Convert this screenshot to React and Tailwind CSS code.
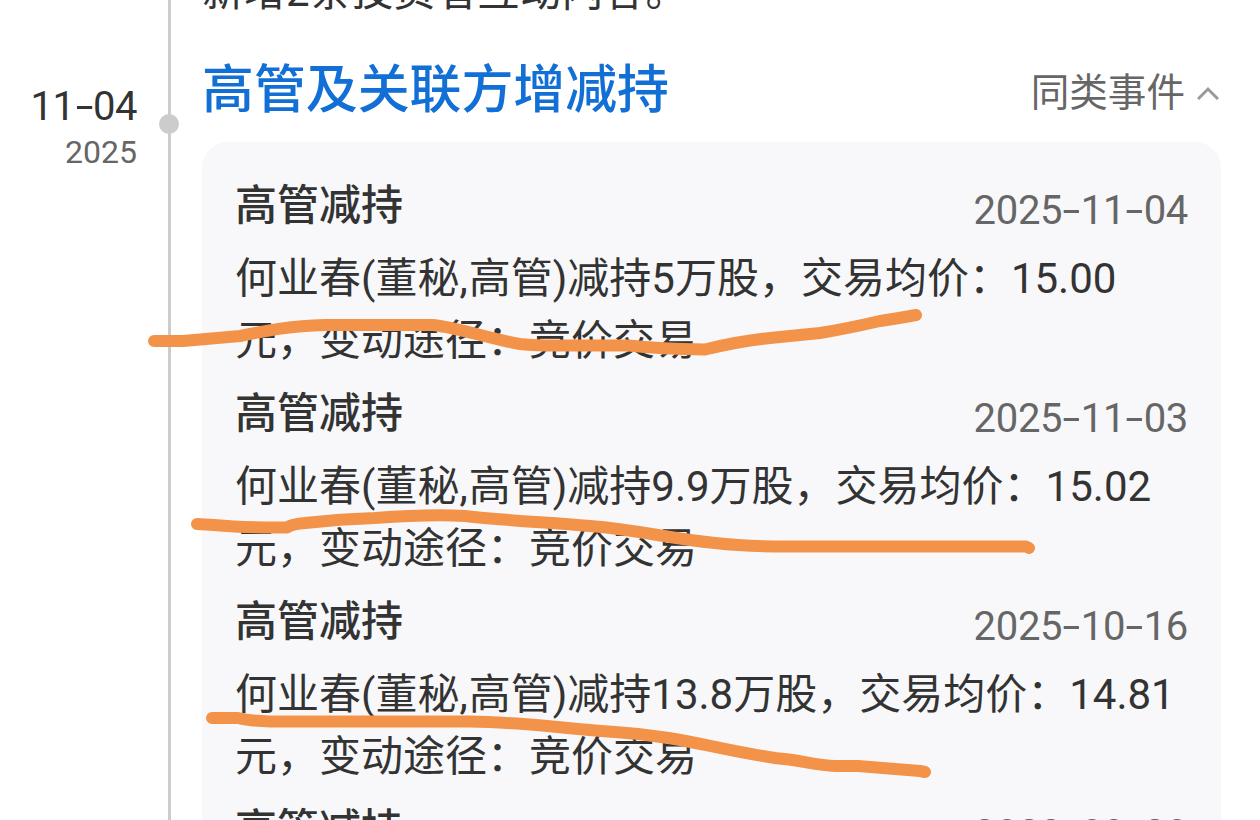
import { Fragment } from "react";

const records = [
  { date: "2025-11-04", amount: "5万股", price: "15.00" },
  { date: "2025-11-03", amount: "9.9万股", price: "15.02" },
  { date: "2025-10-16", amount: "13.8万股", price: "14.81" },
  { date: "2023-09-20", amount: "10万股", price: "16.20" },
];

const strokes = [
  "M154 341 H183 L240 336 C270 330 290 326 325 325 H433 C460 328 490 339 520 344 Q540 346 570 345.500 H628 Q660 349 705 349.500 Q740 341 770 338 L820 333 Q845 329 880 321 Q900 318 916 315",
  "M197 524 L214 525 Q245 528 287 527.500 Q292 524 305 523 Q340 519 375 518 Q430 514 465 516 C500 520 540 522 590 526 C640 530 665 538 715 543 Q750 547 800 546.500 H1026 L1029 548",
  "M212 718 H238 Q250 721 270 721.500 H470 C520 722 560 728 615 732 C680 736 715 749 775 758 C800 760 815 765 835 766 H858 L920 771 L925 772",
];

function DateText({ value }) {
  const parts = value.split("-");
  return parts.map((part, i) => (
    <Fragment key={i}>
      {i > 0 && <span className="inline-block w-[18.500px] scale-x-[1.6] text-center">-</span>}
      <span>{part}</span>
    </Fragment>
  ));
}

function RecordItem({ item }) {
  return (
    <div className="h-[208px] text-[42px] text-[#333333]">
      <div className="flex h-[73px] items-start justify-between">
        <span className="font-medium leading-[62px]">高管减持</span>
        <span className="mt-[5px] text-[40px] leading-[62px] tracking-[-0.3px] text-[#666666]">
          <DateText value={item.date} />
        </span>
      </div>
      <p className="whitespace-nowrap leading-[62px]">
        何业春(董秘<span className="mr-px">,</span>高管)减持{item.amount}，交易均价：{item.price}
        <br />
        元，变动途径：竞价交易
      </p>
    </div>
  );
}

export default function App() {
  return (
    <div className="relative flex h-[820px] w-[1260px] overflow-hidden bg-white font-['Roboto','Noto_Sans_CJK_SC',sans-serif]">
      <aside className="w-[137px] shrink-0 pt-[83px] text-right">
        <div className="text-[40px] leading-[48px] tracking-[-0.5px] text-[#333333]">
          <DateText value="11-04" />
        </div>
        <div className="text-[32px] leading-[43px] text-[#666666]">2025</div>
      </aside>

      <div className="flex w-[65px] shrink-0 pl-[30.500px]">
        <div className="relative h-full w-[3px] bg-[#cccccc]">
          <span className="absolute top-[114px] -left-[8.500px] size-5 rounded-full bg-[#cccccc]" />
        </div>
      </div>

      <main className="w-[1019px] shrink-0">
        <p className="-mt-[39px] h-[62px] text-[42px] leading-[62px] text-[#333333]">新增2条投资者互动内容。</p>
        <div className="flex h-[119px] items-start justify-between">
          <h2 className="mt-[30px] text-[51.900px] leading-[76px] font-medium text-[#116fd5]">高管及关联方增减持</h2>
          <div className="mt-[42px] flex items-center gap-3 text-[38.600px] leading-[56px] text-[#666666]">
            同类事件
            <svg className="mr-0.5 h-4 w-[22px]" viewBox="0 0 22 16" fill="none" stroke="#999999" strokeWidth="3">
              <path d="M1 14 L11 4 L21 14" />
            </svg>
          </div>
        </div>
        <section className="rounded-t-[26px] bg-[#f8f8fa] px-[33px] pt-[33px]">
          {records.map((item) => (
            <RecordItem key={item.date} item={item} />
          ))}
        </section>
      </main>

      {/* marker strokes drawn over the list */}
      <svg className="pointer-events-none absolute inset-0" width="1260" height="820" fill="none" stroke="#f39249" strokeWidth="12" strokeLinecap="round" strokeLinejoin="round">
        {strokes.map((d) => (
          <path key={d} d={d} />
        ))}
      </svg>
    </div>
  );
}
